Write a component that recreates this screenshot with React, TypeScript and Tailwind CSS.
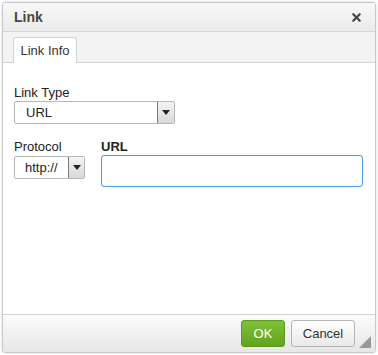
import { X } from "lucide-react";

const Arrow = ({ className = "" }: { className?: string }) => (
  <span
    className={`flex items-center justify-center border-l border-[#777] bg-gradient-to-b from-[#f4f4f4] to-[#d8d8d8] ${className}`}
  >
    <svg width="8" height="5" viewBox="0 0 8 5">
      <path d="M0 0h8L4 5z" fill="#222" />
    </svg>
  </span>
);

export default function App() {
  return (
    <div className="h-[355px] w-[378px] bg-white p-[2px] font-['Liberation_Sans',Arial,sans-serif] text-[13px] leading-[16px] text-[#222]">
      <div className="flex h-[351px] w-[374px] flex-col overflow-hidden rounded-[3px] border border-[#c8c8c8] shadow-[0_0_3px_rgba(0,0,0,0.15)]">
        {/* title bar */}
        <div className="flex h-[29px] items-center justify-between border-b border-[#d4d4d4] bg-gradient-to-b from-[#f8f8f8] to-[#ebebeb] pl-[11px] pr-[12px]">
          <span className="text-[14px] font-bold text-[#474747]">Link</span>
          <X size={13} strokeWidth={4} className="text-[#444]" />
        </div>

        {/* tabs */}
        <div className="flex h-[31px] items-end border-b border-[#d1d1d1] bg-[#f3f3f3] pl-[10px]">
          <div className="-mb-px flex h-[26px] w-[64px] items-center justify-center rounded-t-[3px] border border-b-0 border-[#d1d1d1] bg-white text-[#333]">
            Link Info
          </div>
        </div>

        {/* body */}
        <div className="flex-1 bg-white px-[11px] pt-[22px]">
          <div>Link Type</div>
          <div className="flex h-[23px] w-[161px] items-center rounded-[2px] border border-[#b6b6b6] bg-white">
            <span className="flex-1 pl-[11px]">URL</span>
            <Arrow className="h-full w-[17px]" />
          </div>

          <div className="mt-[15px] flex gap-[16px]">
            <div>
              <div>Protocol</div>
              <div className="mt-[1px] flex h-[23px] w-[71px] items-center rounded-[2px] border border-[#b6b6b6] bg-white">
                <span className="flex-1 pl-[10px]">http://</span>
                <Arrow className="h-full w-[16px]" />
              </div>
            </div>
            <div className="flex-1">
              <div className="font-bold">URL</div>
              <div className="h-[32px] w-[262px] rounded-[3px] border border-[#4a9fe0] bg-white shadow-[inset_0_0_1px_rgba(74,159,224,0.4)]" />
            </div>
          </div>
        </div>

        {/* footer */}
        <div className="relative flex h-[38px] items-center justify-end gap-[6px] border-t border-[#d1d1d1] bg-gradient-to-b from-[#fbfbfb] to-[#e7e7e7] pr-[20px]">
          <button className="flex h-[27px] w-[44px] items-center justify-center rounded-[3px] border border-[#5b9a1e] bg-gradient-to-b from-[#7ebf3a] to-[#62a41f] text-white">
            OK
          </button>
          <button className="flex h-[27px] w-[64px] items-center justify-center rounded-[3px] border border-[#b6b6b6] bg-gradient-to-b from-[#ffffff] to-[#e9e9e9] text-[#333]">
            Cancel
          </button>
          <svg className="absolute bottom-[4px] right-[4px]" width="12" height="12" viewBox="0 0 12 12">
            <path d="M12 0v12H0z" fill="#999" />
          </svg>
        </div>
      </div>
    </div>
  );
}
